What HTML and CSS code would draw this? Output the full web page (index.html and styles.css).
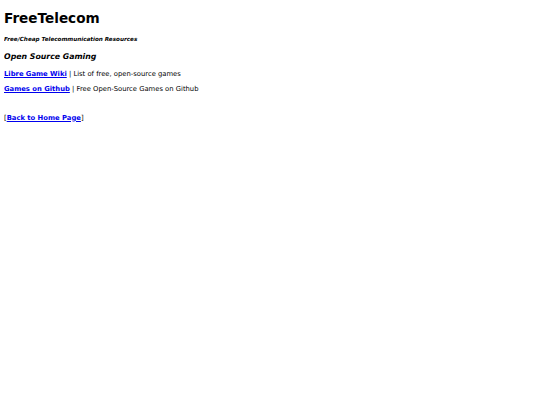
FILE: index.html
```html
<!DOCTYPE html>
<html>
<head>
<meta charset="utf-8">
<title>FreeTelecom</title>
<link rel="stylesheet" href="styles.css">
</head>
<body>
<h1 class="title">FreeTelecom</h1>
<h5 class="tagline">Free/Cheap Telecommunication Resources</h5>
<h3 class="section">Open Source Gaming</h3>
<p class="item"><a href="#">Libre Game Wiki</a> | List of free, open-source games</p>
<p class="item"><a href="#">Games on Github</a> | Free Open-Source Games on Github</p>
<br>
<p class="item">[<a href="#">Back to Home Page</a>]</p>
</body>
</html>
```
FILE: styles.css
```css
body {
  margin: 4px;
  font-family: "DejaVu Sans", Verdana, sans-serif;
  font-size: 6.8px;
  line-height: 14.7px;
  color: #000;
  background: #fff;
}
.title {
  font-size: 13.6px;
  line-height: 16px;
  font-weight: bold;
  margin: 6px 0 9.5px;
}
.tagline {
  font-size: 5.65px;
  line-height: 7px;
  font-style: italic;
  font-weight: bold;
  margin: 0 0 9.2px;
}
.section {
  font-size: 7.8px;
  line-height: 9px;
  font-style: italic;
  font-weight: bold;
  margin: 0 0 9.6px;
}
.item {
  line-height: 8px;
  margin: 0 0 6.3px;
}
a {
  color: #0000ee;
  font-weight: bold;
}
```
